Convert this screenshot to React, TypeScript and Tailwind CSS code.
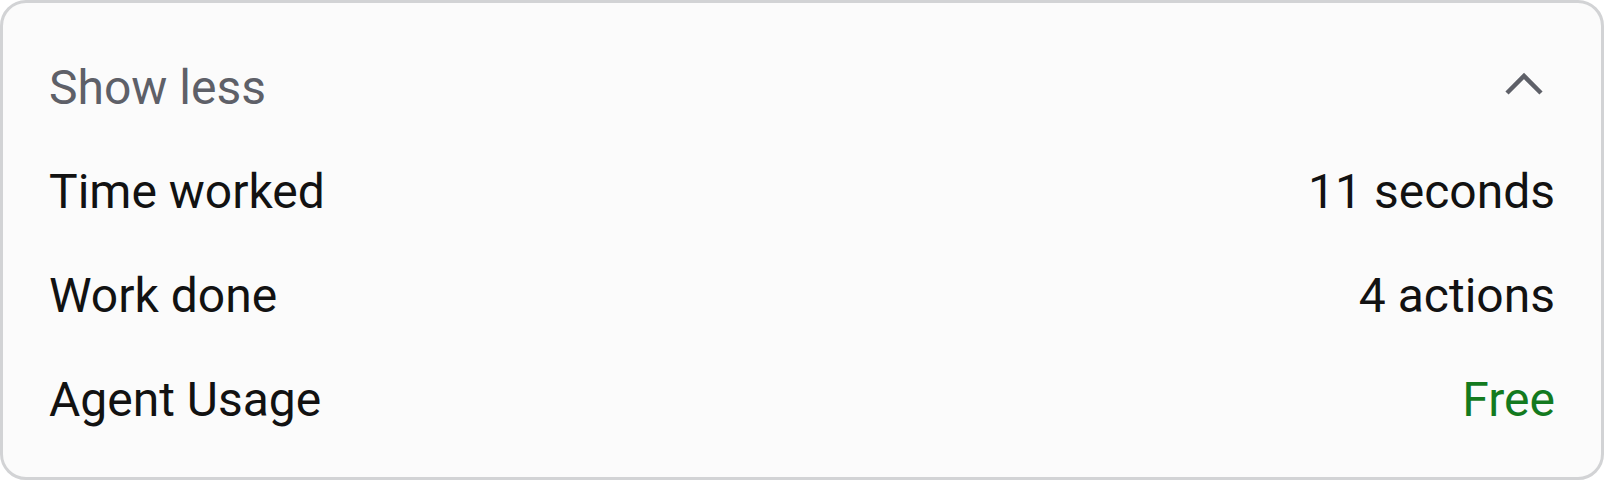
export default function App() {
  const rows = [
    { label: 'Time worked', value: '11 seconds', green: false },
    { label: 'Work done', value: '4 actions', green: false },
    { label: 'Agent Usage', value: 'Free', green: true },
  ]

  return (
    <div className="w-[1604px] h-[480px] bg-white" style={{ fontFamily: 'Roboto, "Noto Sans", sans-serif' }}>
      <div className="h-full rounded-[26px] border-[3px] border-[#d2d3d5] bg-[#fbfbfb] pl-[46px] pr-[46px] pt-[53px] flex flex-col gap-[40px] text-[48px] leading-[64px]">
        <div className="flex items-center justify-between">
          <span className="text-[#5e6068]">Show less</span>
          <svg width="40" height="24" viewBox="0 0 40 24" className="mr-[11px] mb-[8px]" fill="none">
            <path d="M3 21 L20 4 L37 21" stroke="#5e6068" strokeWidth="4.5" strokeLinecap="butt" />
          </svg>
        </div>
        {rows.map(r => (
          <div key={r.label} className="flex items-center justify-between">
            <span className="text-[#121212]">{r.label}</span>
            <span className={r.green ? 'text-[#137a1f]' : 'text-[#121212]'}>{r.value}</span>
          </div>
        ))}
      </div>
    </div>
  )
}
